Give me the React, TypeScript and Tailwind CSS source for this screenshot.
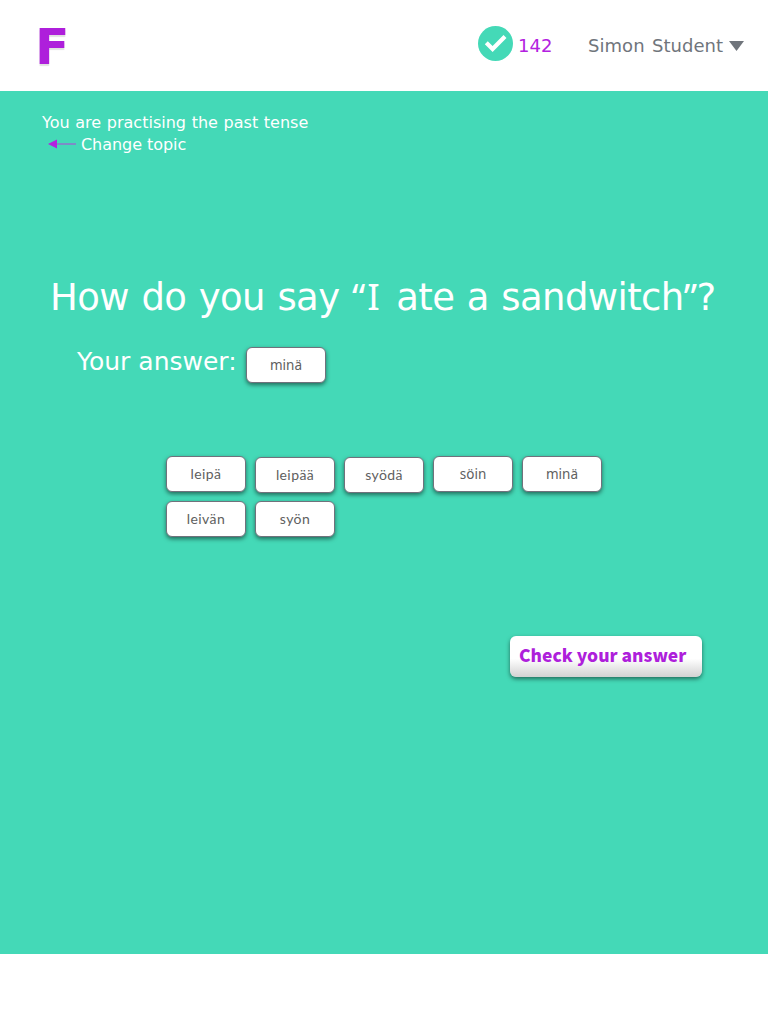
import type { ReactNode } from "react";

type Face = "humanist" | "plain";

function Tile({ children, face, low = false }: { children: ReactNode; face: Face; low?: boolean }) {
  const font =
    face === "humanist"
      ? "font-[Lato,sans-serif] text-[14px] tracking-[0.4px] pb-px"
      : "font-[Noto_Sans,sans-serif] text-[13.5px] pt-px";
  return (
    <button
      className={`flex h-[36px] w-[80px] items-center justify-center rounded-[6px] border border-[#70727c] bg-white text-[#606060] shadow-[0_2px_4px_rgba(0,0,0,0.5)] ${font} ${low ? "mt-px" : ""}`}
    >
      {children}
    </button>
  );
}

const words: { text: string; face: Face; low?: boolean }[] = [
  { text: "leipä", face: "humanist" },
  { text: "leipää", face: "humanist", low: true },
  { text: "syödä", face: "humanist", low: true },
  { text: "söin", face: "plain" },
  { text: "minä", face: "plain" },
  { text: "leivän", face: "humanist" },
  { text: "syön", face: "humanist" },
];

function Header() {
  return (
    <header className="flex h-[91px] items-start bg-white">
      <div className="ml-[35px] mt-[18px] w-[40px] font-[DejaVu_Sans,sans-serif] text-[50.5px] leading-[57px] font-bold text-[#ae1fdb] [text-shadow:0_2px_1px_rgba(0,0,0,0.12)]">
        F
      </div>
      <svg className="ml-[403px] mt-[26px] h-[35px] w-[35px] shrink-0" viewBox="0 0 35 35">
        <circle cx="17.5" cy="17.5" r="17.5" fill="#44d9b7" />
        <path d="M8.3 16.8 14.6 23 27 10.6" fill="none" stroke="#fff" strokeWidth="4.2" />
      </svg>
      <span className="ml-[5px] mt-[34px] w-[70px] text-[18px] leading-6 text-[#b321e0]">142</span>
      <button className="mt-[34px] flex items-center whitespace-nowrap text-[18px] leading-6 text-[#70757c]">
        <span className="w-[141px] text-left tracking-[0.05px] [word-spacing:1.5px]">Simon Student</span>
        <svg className="h-[10px] w-[15px]" viewBox="0 0 15 10">
          <path d="M0 0H15L7.5 10Z" fill="#70757c" />
        </svg>
      </button>
    </header>
  );
}

export default function App() {
  return (
    <div className="h-[1024px] w-[768px] overflow-hidden bg-white font-[DejaVu_Sans,sans-serif]">
      <Header />
      <main className="flex h-[863px] flex-col bg-[#44d9b7] text-white">
        <div className="ml-[42px] mt-[21px] text-[16px] leading-[22px]">
          <p className="whitespace-nowrap [word-spacing:0.6px]">You are practising the past tense</p>
          <a className="flex items-start">
            <svg className="ml-[5.5px] mr-[5.5px] mt-[5px] h-[10px] w-[28px]" viewBox="0 0 28 10">
              <path d="M8 5H28" stroke="#8c78cb" strokeWidth="1.6" />
              <path d="M0 5 9 0.5V9.5Z" fill="#b321e0" />
            </svg>
            <span className="tracking-[-0.05px]">Change topic</span>
          </a>
        </div>
        <h1 className="ml-[50px] mt-[116px] whitespace-nowrap text-[37px] leading-[48px] tracking-[-0.6px] [word-spacing:1.3px]">
          How do you say{" "}
          <span className="pr-[2px] font-[Noto_Sans,sans-serif] tracking-[2px]">“I</span> ate a sandwitch
          <span className="font-[Noto_Sans,sans-serif]">”</span>?
        </h1>
        <div className="ml-[77px] mt-[25px] flex h-[37px] items-start">
          <span className="mt-[-1px] w-[169px] whitespace-nowrap text-[25px] leading-[32px]">Your answer:</span>
          <Tile face="plain">minä</Tile>
        </div>
        <div className="ml-[166px] mt-[72px] flex w-[450px] flex-wrap items-start gap-x-[9px] gap-y-[8px]">
          {words.map((w) => (
            <Tile key={w.text} face={w.face} low={w.low}>
              {w.text}
            </Tile>
          ))}
        </div>
        <button className="ml-[510px] mt-[99px] h-[41px] w-[192px] rounded-[6px] bg-linear-to-b from-white from-55% to-[#d2d2d2] pb-[4px] pl-[9px] text-left font-[Noto_Sans_CJK_SC,sans-serif] text-[17.4px] leading-6 font-black whitespace-nowrap text-[#ae1fdb] shadow-[0_2px_4px_rgba(0,0,0,0.5)]">
          Check your answer
        </button>
      </main>
    </div>
  );
}
